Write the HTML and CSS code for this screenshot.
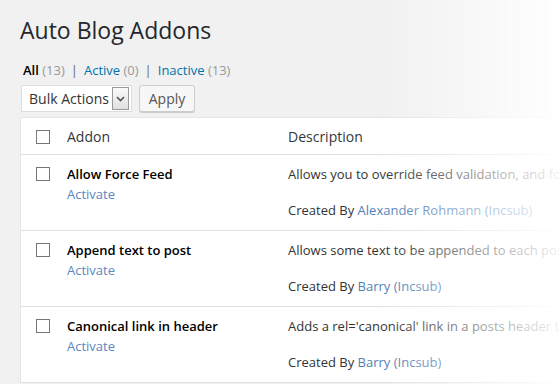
FILE: index.html
```html
<!DOCTYPE html>
<html lang="en">
<head>
  <meta charset="UTF-8" />
  <title>Auto Blog Addons</title>
  <link rel="stylesheet" href="styles.css">
</head>
<body>

  <div class="wrap">
    <h1>Auto Blog Addons</h1>

    <ul class="subsubsub">
      <li class="current">All <span class="count">(13)</span></li>
      <li class="sep">|</li>
      <li><a href="#">Active</a> <span class="count">(0)</span></li>
      <li class="sep">|</li>
      <li><a href="#">Inactive</a> <span class="count">(13)</span></li>
    </ul>

    <div class="tablenav">
      <div class="select">
        <span>Bulk Actions</span>
        <span class="select-arrow">
          <svg width="9" height="6" viewBox="0 0 9 6"><path d="M1 1 L4.5 4.5 L8 1" fill="none" stroke="#555" stroke-width="1.6"/></svg>
        </span>
      </div>
      <button class="button">Apply</button>
    </div>

    <table class="addons">
      <thead>
        <tr>
          <th class="check"><span class="box"></span></th>
          <th class="name">Addon</th>
          <th>Description</th>
        </tr>
      </thead>
      <tbody>
        <tr>
          <td class="check"><span class="box"></span></td>
          <td class="name">
            <strong>Allow Force Feed</strong>
            <a class="action" href="#">Activate</a>
          </td>
          <td class="desc">
            <p>Allows you to override feed validation, and force a feed to be processed</p>
            <p>Created By <a href="#">Alexander Rohmann</a> <a href="#">(Incsub)</a></p>
          </td>
        </tr>
        <tr>
          <td class="check"><span class="box"></span></td>
          <td class="name">
            <strong>Append text to post</strong>
            <a class="action" href="#">Activate</a>
          </td>
          <td class="desc">
            <p>Allows some text to be appended to each post imported</p>
            <p>Created By <a href="#">Barry</a> <a href="#">(Incsub)</a></p>
          </td>
        </tr>
        <tr>
          <td class="check"><span class="box"></span></td>
          <td class="name">
            <strong>Canonical link in header</strong>
            <a class="action" href="#">Activate</a>
          </td>
          <td class="desc">
            <p>Adds a rel='canonical' link in a posts header to the original source</p>
            <p>Created By <a href="#">Barry</a> <a href="#">(Incsub)</a></p>
          </td>
        </tr>
      </tbody>
    </table>
  </div>

  <!-- right side fade over the page -->
  <div class="fade"></div>

</body>
</html>
```

FILE: styles.css
```css
html {
  overflow: hidden;
}

body {
  margin: 0;
  background: #f1f1f1;
  font-family: 'Open Sans', sans-serif;
  font-size: 13px;
  color: #444;
}

a {
  color: #0073aa;
  text-decoration: none;
}

.wrap {
  padding: 0 0 0 20px;
  width: 760px;
}

h1 {
  margin: 0;
  padding: 16px 0 0;
  font-size: 23px;
  font-weight: 400;
  line-height: 29px;
  color: #23282d;
}

.subsubsub {
  list-style: none;
  margin: 13px 0 0;
  padding: 0 0 0 3px;
  display: flex;
  gap: 4px;
  line-height: 24px;
  color: #666;
}

.subsubsub .current {
  color: #000;
  font-weight: 600;
}

.subsubsub .current .count {
  font-weight: 400;
}

.subsubsub .count {
  color: #999;
}

.subsubsub .sep {
  padding: 0 2px;
}

.tablenav {
  display: flex;
  gap: 7px;
  margin: 3px 0 0 1px;
  height: 27px;
}

.select {
  width: 111px;
  height: 27px;
  background: #fff;
  border: 1px solid #ddd;
  display: flex;
  align-items: center;
  justify-content: space-between;
  padding: 0 2px 0 7px;
  box-sizing: border-box;
  font-size: 14px;
  color: #333;
}

.select-arrow {
  width: 15px;
  height: 21px;
  border: 1px solid #999;
  background: linear-gradient(#fafafa, #e0e0e0);
  display: flex;
  align-items: center;
  justify-content: center;
}

.button {
  height: 27px;
  width: 56px;
  border: 1px solid #ccc;
  border-radius: 3px;
  background: #f7f7f7;
  box-shadow: 0 1px 0 #ccc;
  font-family: 'Open Sans', sans-serif;
  font-size: 14px;
  color: #555;
  padding: 0;
}

.addons {
  margin-top: 5px;
  width: 740px;
  border-collapse: collapse;
  table-layout: fixed;
  background: #fff;
  border: 1px solid #e5e5e5;
}

.addons th {
  height: 36px;
  padding: 0 10px 0 6px;
  text-align: left;
  font-size: 14px;
  font-weight: 400;
  color: #32373c;
  border-bottom: 1px solid #e1e1e1;
}

.addons th.check,
.addons td.check {
  width: 26px;
  padding: 0 0 0 15px;
}

.addons th.name {
  width: 205px;
  padding-left: 5px;
}

.addons td {
  vertical-align: top;
  padding: 9px 10px 10px 6px;
  height: 56px;
  border-bottom: 1px solid #e1e1e1;
  line-height: 20px;
}

.addons td.name {
  padding-left: 5px;
}

.addons td.check {
  padding-top: 12px;
}

.box {
  display: block;
  width: 12px;
  height: 12px;
  border: 1px solid #777;
  background: #fff;
}

.addons th .box {
  margin-top: 1px;
}

.addons td.name strong {
  display: block;
  font-weight: 600;
  color: #000;
}

.addons td.name .action {
  display: block;
  color: #5b87c0;
}

.addons td.desc {
  color: #333;
}

.desc p {
  margin: 0 0 16px;
  white-space: nowrap;
}

.desc p:last-child {
  margin-bottom: 0;
}

.desc a {
  color: #4f7fb8;
}

.fade {
  position: fixed;
  top: 0;
  right: 0;
  width: 180px;
  height: 100%;
  background: linear-gradient(to right, rgba(255, 255, 255, 0), rgba(255, 255, 255, 0.93));
  pointer-events: none;
}
```
